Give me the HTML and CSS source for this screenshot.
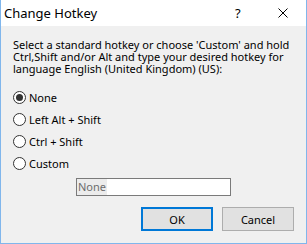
FILE: index.html
```html
<!DOCTYPE html>
<html>
<head>
  <link rel="stylesheet" href="styles.css">
</head>
<body>

  <!-- Dialog window -->
  <div class="window">

    <!-- Title bar with help and close buttons -->
    <div class="title-bar">
      <span class="title">Change Hotkey</span>
      <span class="help">?</span>
      <svg class="close" width="10" height="10" viewBox="0 0 10 10">
        <path d="M0.5 0.5 L9.5 9.5 M9.5 0.5 L0.5 9.5" stroke="#000" stroke-width="1" fill="none"/>
      </svg>
    </div>

    <div class="content">
      <p class="intro">Select a standard hotkey or choose 'Custom' and hold<br>Ctrl,Shift and/or Alt and type your desired hotkey for<br>language English (United Kingdom) (US):</p>

      <!-- Hotkey choices -->
      <div class="choices">
        <label class="choice"><span class="radio checked"></span>None</label>
        <label class="choice"><span class="radio"></span>Left Alt + Shift</label>
        <label class="choice"><span class="radio"></span>Ctrl + Shift</label>
        <label class="choice"><span class="radio"></span>Custom</label>
      </div>

      <div class="hotkey-box"><span class="hotkey-text">None</span></div>

      <div class="buttons">
        <button class="button default">OK</button>
        <button class="button">Cancel</button>
      </div>
    </div>

  </div>

</body>
</html>
```

FILE: styles.css
```css
/* Page and dialog frame */
body {
  margin: 0;
  font-family: "Noto Sans", "Open Sans", sans-serif;
  font-size: 11px;
  color: #000;
}

.window {
  width: 307px;
  height: 244px;
  box-sizing: border-box;
  border: 1px solid #80b6ec;
  border-top: none;
  background: #f0f0f0;
  display: flex;
  flex-direction: column;
}

/* Title bar */
.title-bar {
  height: 26px;
  flex-shrink: 0;
  background: #fff;
  display: flex;
  align-items: center;
  padding-left: 3px;
}

.title {
  font-size: 13px;
  flex: 1;
}

.help {
  font-size: 13px;
  width: 10px;
  margin-right: 33px;
}

.close {
  margin-right: 18px;
}

/* Dialog body */
.content {
  padding: 0 12px;
  display: flex;
  flex-direction: column;
}

.intro {
  margin: 13px 0 0 0;
  line-height: 12px;
  white-space: nowrap;
}

.choices {
  margin-top: 11px;
  display: flex;
  flex-direction: column;
}

.choice {
  height: 22px;
  display: flex;
  align-items: center;
}

/* Round radio button */
.radio {
  width: 13px;
  height: 13px;
  box-sizing: border-box;
  border: 1px solid #333;
  border-radius: 50%;
  background: #fff;
  margin-right: 3px;
  display: flex;
  align-items: center;
  justify-content: center;
}

.radio.checked:after {
  content: "";
  width: 7px;
  height: 7px;
  border-radius: 50%;
  background: #333;
}

/* Hotkey text box */
.hotkey-box {
  margin: 4px 0 0 63px;
  width: 155px;
  height: 18px;
  box-sizing: border-box;
  border: 1px solid #7a7a7a;
  background: #fff;
  display: flex;
  align-items: center;
}

.hotkey-text {
  color: #6d6d6d;
  background: #ececec;
  padding: 0 1px;
  line-height: 16px;
}

/* OK / Cancel */
.buttons {
  margin-top: 11px;
  display: flex;
  justify-content: flex-end;
  gap: 9px;
}

.button {
  width: 72px;
  height: 24px;
  box-sizing: border-box;
  border: 1px solid #adadad;
  background: #e1e1e1;
  font-family: inherit;
  font-size: 11px;
  color: #000;
  padding: 0;
}

.button.default {
  border: 2px solid #0078d7;
}
```
